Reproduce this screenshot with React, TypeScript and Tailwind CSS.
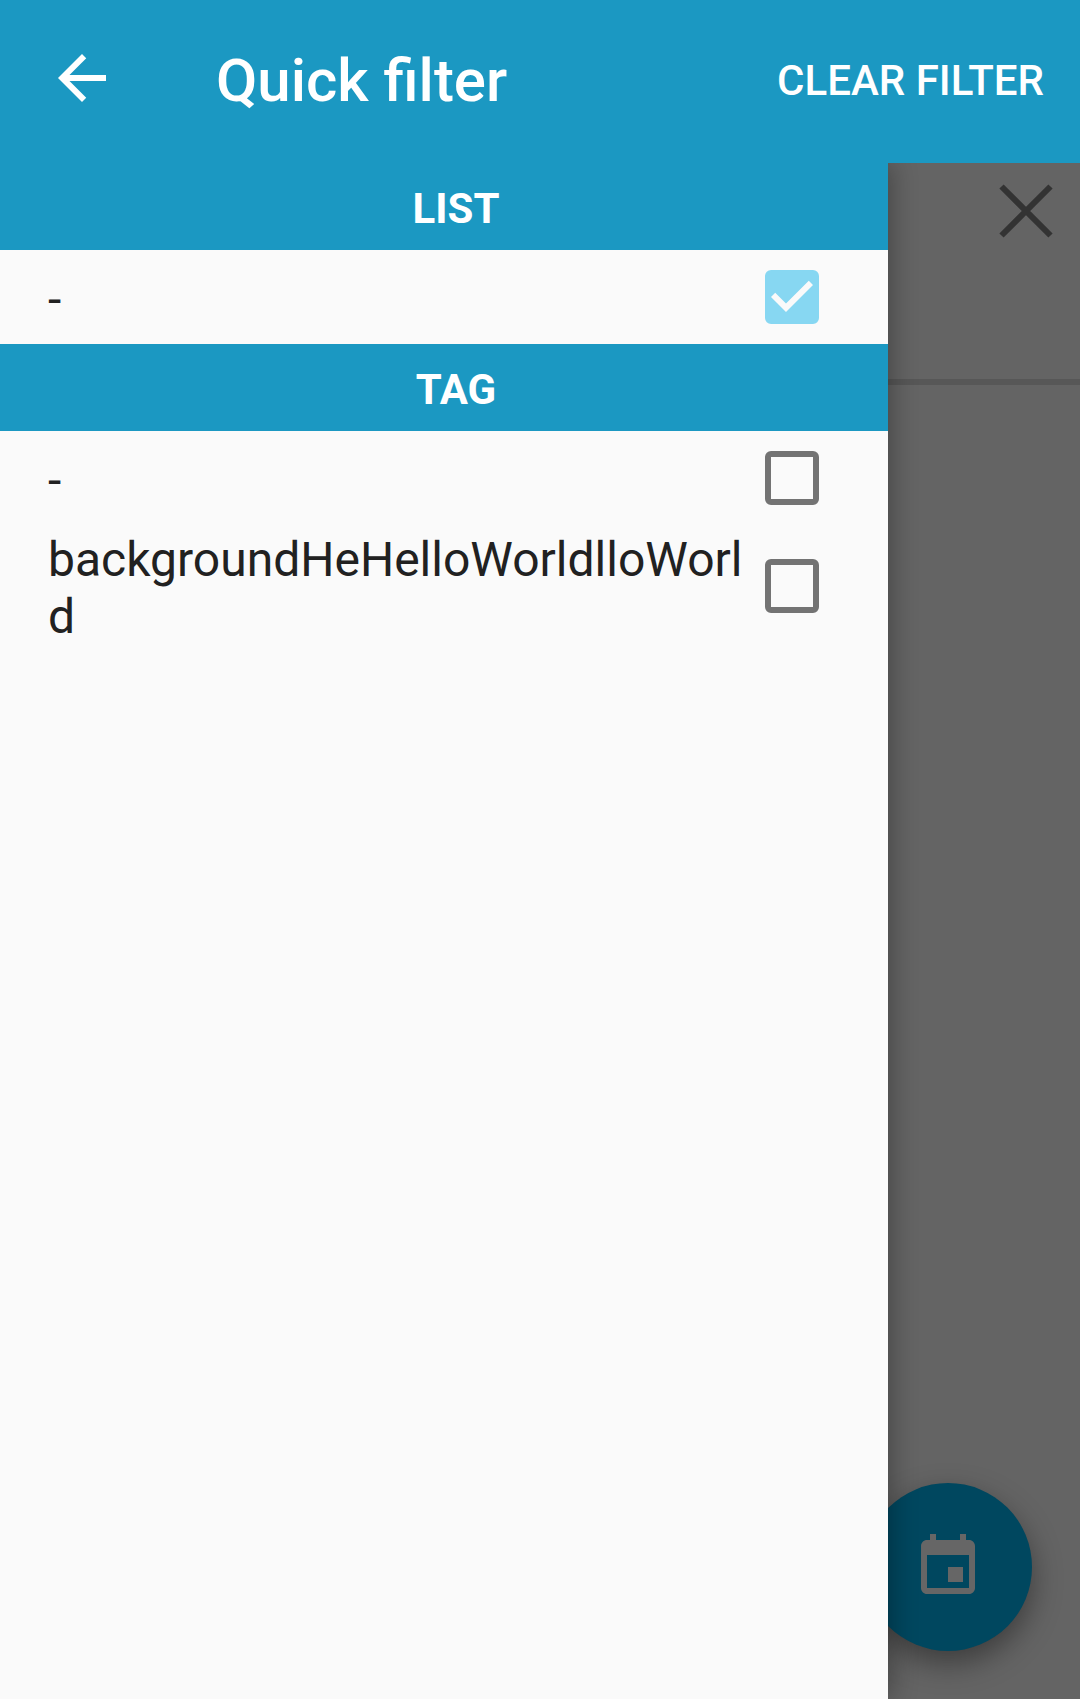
import { useState } from "react";

type Item = { id: string; label: string; checked: boolean };

function BackIcon() {
  return (
    <svg viewBox="0 0 24 24" className="size-[72px]" fill="currentColor" aria-hidden="true">
      <path d="M20 11H7.83l5.59-5.59L12 4l-8 8 8 8 1.41-1.41L7.83 13H20v-2z" />
    </svg>
  );
}

function EventIcon() {
  return (
    <svg viewBox="0 0 24 24" className="size-[72px]" fill="currentColor" aria-hidden="true">
      <path d="M17 12h-5v5h5v-5zM16 1v2H8V1H6v2H5c-1.11 0-1.99.9-1.99 2L3 19c0 1.1.89 2 2 2h14c1.1 0 2-.9 2-2V5c0-1.1-.9-2-2-2h-1V1h-2zm3 18H5V8h14v11z" />
    </svg>
  );
}

function CloseIcon() {
  return (
    <svg viewBox="0 0 54 54" className="size-[54px]" stroke="currentColor" strokeWidth="6" fill="none" aria-hidden="true">
      <path d="M2.5 2.5l49 49M51.5 2.5l-49 49" />
    </svg>
  );
}

function FilterRow({ item, onToggle }: { item: Item; onToggle: () => void }) {
  return (
    <li className="flex min-h-[94px] items-center pr-[69px] pl-12">
      <label htmlFor={item.id} className="min-w-0 flex-1 pt-1.5 pb-0.5 text-[48px] leading-[57px] break-all text-[#212121]">
        {item.label}
      </label>
      <span className="ml-5 grid shrink-0">
        <input
          id={item.id}
          type="checkbox"
          checked={item.checked}
          onChange={onToggle}
          className="col-start-1 row-start-1 size-[54px] appearance-none rounded-[6px] border-[6px] border-[#737373] checked:border-[#87d7f2] checked:bg-[#87d7f2]"
        />
        {item.checked && (
          <svg viewBox="3 3 18 18" className="pointer-events-none col-start-1 row-start-1 size-[54px]" fill="#fafafa" aria-hidden="true">
            <path d="M10 17l-5-5 1.41-1.41L10 14.17l7.59-7.59L19 8l-9 9z" />
          </svg>
        )}
      </span>
    </li>
  );
}

function Section({ title, items, onToggle }: { title: string; items: Item[]; onToggle: (id: string) => void }) {
  return (
    <section>
      <h2 className="bg-[#1b98c2] pt-5 pb-4 pl-6 text-center text-[42px] leading-[51px] font-bold text-white">{title}</h2>
      <ul>
        {items.map((item) => (
          <FilterRow key={item.id} item={item} onToggle={() => onToggle(item.id)} />
        ))}
      </ul>
    </section>
  );
}

export default function App() {
  const [lists, setLists] = useState<Item[]>([{ id: "list-none", label: "-", checked: true }]);
  const [tags, setTags] = useState<Item[]>([
    { id: "tag-none", label: "-", checked: false },
    { id: "tag-background", label: "backgroundHeHelloWorldlloWorld", checked: false },
  ]);

  const toggle = (id: string) => (items: Item[]) =>
    items.map((item) => (item.id === id ? { ...item, checked: !item.checked } : item));
  const clear = (items: Item[]) => items.map((item) => ({ ...item, checked: false }));

  return (
    <div className="flex min-h-screen flex-col bg-[#646464] font-[Roboto,sans-serif]">
      <header className="relative z-20 flex h-[163px] items-center bg-[#1b98c2] pr-9 pl-[46px] text-white">
        <button type="button" aria-label="Back" className="mb-[7px]">
          <BackIcon />
        </button>
        <h1 className="ml-[98px] flex-1 pb-0.5 text-[60px] leading-[70px] font-medium">Quick filter</h1>
        <button
          type="button"
          onClick={() => {
            setLists(clear);
            setTags(clear);
          }}
          className="pb-0.5 text-[42px] leading-[50px] font-medium"
        >
          CLEAR FILTER
        </button>
      </header>
      <div className="flex flex-1">
        <aside className="relative z-10 min-w-0 flex-1 bg-[#fafafa] shadow-[4px_0_24px_rgba(0,0,0,0.3)]">
          <Section title="LIST" items={lists} onToggle={(id) => setLists(toggle(id))} />
          <Section title="TAG" items={tags} onToggle={(id) => setTags(toggle(id))} />
        </aside>
        <main className="relative w-48 shrink-0">
          <div className="flex h-[222px] items-start justify-end border-b-[6px] border-[#575757] pt-[21px] pr-[27px]">
            <button type="button" aria-label="Close" className="text-[#333333]">
              <CloseIcon />
            </button>
          </div>
          <button
            type="button"
            aria-label="Choose date"
            className="absolute right-12 bottom-12 flex size-[168px] items-center justify-center rounded-full bg-[#00475f] text-[#666666] shadow-[0_12px_30px_rgba(0,0,0,0.4)]"
          >
            <EventIcon />
          </button>
        </main>
      </div>
    </div>
  );
}
